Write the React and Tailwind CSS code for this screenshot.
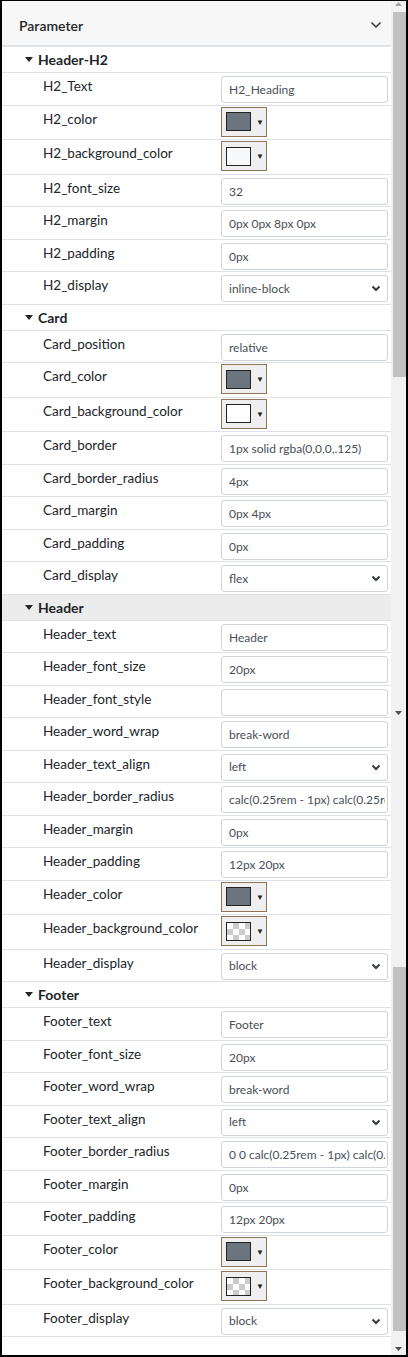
import React from 'react';

const FONT = { fontFamily: 'Lato, "Noto Sans", sans-serif' };

const sections = [
  {
    title: 'Header-H2',
    rows: [
      { label: 'H2_Text', type: 'text', value: 'H2_Heading' },
      { label: 'H2_color', type: 'color', color: '#6c757d' },
      { label: 'H2_background_color', type: 'color', color: '#f8f9fa' },
      { label: 'H2_font_size', type: 'text', value: '32' },
      { label: 'H2_margin', type: 'text', value: '0px 0px 8px 0px' },
      { label: 'H2_padding', type: 'text', value: '0px' },
      { label: 'H2_display', type: 'select', value: 'inline-block' },
    ],
  },
  {
    title: 'Card',
    rows: [
      { label: 'Card_position', type: 'text', value: 'relative' },
      { label: 'Card_color', type: 'color', color: '#6c757d' },
      { label: 'Card_background_color', type: 'color', color: '#ffffff' },
      { label: 'Card_border', type: 'text', value: '1px solid rgba(0,0,0,.125)' },
      { label: 'Card_border_radius', type: 'text', value: '4px' },
      { label: 'Card_margin', type: 'text', value: '0px 4px' },
      { label: 'Card_padding', type: 'text', value: '0px' },
      { label: 'Card_display', type: 'select', value: 'flex' },
    ],
  },
  {
    title: 'Header',
    active: true,
    rows: [
      { label: 'Header_text', type: 'text', value: 'Header' },
      { label: 'Header_font_size', type: 'text', value: '20px' },
      { label: 'Header_font_style', type: 'text', value: '' },
      { label: 'Header_word_wrap', type: 'text', value: 'break-word' },
      { label: 'Header_text_align', type: 'select', value: 'left' },
      { label: 'Header_border_radius', type: 'text', value: 'calc(0.25rem - 1px) calc(0.25rem - 1px) 0 0' },
      { label: 'Header_margin', type: 'text', value: '0px' },
      { label: 'Header_padding', type: 'text', value: '12px 20px' },
      { label: 'Header_color', type: 'color', color: '#6c757d' },
      { label: 'Header_background_color', type: 'color', color: 'transparent' },
      { label: 'Header_display', type: 'select', value: 'block' },
    ],
  },
  {
    title: 'Footer',
    rows: [
      { label: 'Footer_text', type: 'text', value: 'Footer' },
      { label: 'Footer_font_size', type: 'text', value: '20px' },
      { label: 'Footer_word_wrap', type: 'text', value: 'break-word' },
      { label: 'Footer_text_align', type: 'select', value: 'left' },
      { label: 'Footer_border_radius', type: 'text', value: '0 0 calc(0.25rem - 1px) calc(0.25rem - 1px)' },
      { label: 'Footer_margin', type: 'text', value: '0px' },
      { label: 'Footer_padding', type: 'text', value: '12px 20px' },
      { label: 'Footer_color', type: 'color', color: '#6c757d' },
      { label: 'Footer_background_color', type: 'color', color: 'transparent' },
      { label: 'Footer_display', type: 'select', value: 'block' },
    ],
  },
];

const Checker = () => (
  <svg width="23" height="17" viewBox="0 0 23 17" className="block">
    <rect width="23" height="17" fill="#ffffff" />
    {[0, 1, 2].map(r =>
      [0, 1, 2, 3].map(c =>
        (r + c) % 2 === 1 ? (
          <rect key={`${r}-${c}`} x={c * 6} y={r * 6} width="6" height="6" fill="#cbcbcb" />
        ) : null
      )
    )}
  </svg>
);

const ColorButton = ({ color }) => (
  <div className="flex items-center w-[46px] h-[30px] border border-[#8f7356] bg-[#efefef] pl-[4px]">
    <div className="w-[25px] h-[19px] border border-[#222] overflow-hidden" style={{ backgroundColor: color === 'transparent' ? undefined : color }}>
      {color === 'transparent' && <Checker />}
    </div>
    <span className="ml-[5px] text-[8px] leading-none text-[#222]">▼</span>
  </div>
);

const TextBox = ({ value }) => (
  <input
    readOnly
    value={value}
    className="block w-[167px] h-[27px] border border-[#ced4da] rounded-[3px] bg-white pl-[7px] pr-[2px] text-[12px] text-[#495057] outline-none"
    style={FONT}
  />
);

const SelectBox = ({ value }) => (
  <div className="w-[167px] h-[27px] border border-[#ced4da] rounded-[3px] bg-white pl-[7px] pr-[6px] flex items-center justify-between text-[12px] text-[#495057]">
    <span>{value}</span>
    <svg width="10" height="7" viewBox="0 0 10 7">
      <path d="M1.5 1.5 L5 5 L8.5 1.5" fill="none" stroke="#343a40" strokeWidth="2" />
    </svg>
  </div>
);

const Row = ({ row }) => {
  const isColor = row.type === 'color';
  return (
    <div className={`flex border-b border-[#dee2e6] ${isColor ? 'h-[34.5px]' : 'h-[32.5px]'}`}>
      <div className="w-[219px] shrink-0 pl-[41px] pt-[3px] text-[13.5px] leading-[20px] text-[#212529]">
        {row.label}
      </div>
      <div className={isColor ? 'pt-[1px]' : 'pt-[3px]'}>
        {row.type === 'text' && <TextBox value={row.value} />}
        {row.type === 'select' && <SelectBox value={row.value} />}
        {isColor && <ColorButton color={row.color} />}
      </div>
    </div>
  );
};

const Section = ({ section }) => (
  <div>
    <div className={`flex items-center h-[26px] border-b border-[#dee2e6] pl-[23px] text-[14px] font-bold text-[#212529] ${section.active ? 'bg-[#ececec]' : ''}`}>
      <svg width="8" height="5" viewBox="0 0 8 5" className="mr-[5px]">
        <path d="M0 0 H8 L4 5 Z" fill="#212529" />
      </svg>
      {section.title}
    </div>
    {section.rows.map(row => (
      <Row key={row.label} row={row} />
    ))}
  </div>
);

const Arrow = ({ up, color }) => (
  <svg width="7" height="4" viewBox="0 0 7 4">
    <path d={up ? 'M0 4 L3.5 0 L7 4 Z' : 'M0 0 L7 0 L3.5 4 Z'} fill={color} />
  </svg>
);

const Scrollbar = () => (
  <div className="w-[15px] shrink-0 bg-[#f1f1f1] flex flex-col">
    <div className="h-[11px] flex justify-center pt-[1px]">
      <Arrow up color="#a3a3a3" />
    </div>
    <div className="h-[365px] ml-[2px] bg-[#c1c1c1]" />
    <div className="h-[330px]" />
    <div className="h-[12px] flex items-center justify-center">
      <Arrow color="#505050" />
    </div>
    <div className="h-[248px]" />
    <div className="h-[364px] ml-[2px] bg-[#c1c1c1]" />
    <div className="flex-1 flex items-end justify-center pb-[4px]">
      <Arrow color="#505050" />
    </div>
  </div>
);

export default function App() {
  return (
    <div className="w-[408px] h-[1357px] bg-white border-2 border-t border-black flex overflow-hidden" style={FONT}>
      <div className="w-[389px] shrink-0">
        <div className="h-[46px] bg-[#f7f7f7] border-b-2 border-[#dfe3e6] flex items-center justify-between pl-[17px] pr-[9px] pt-[4px]">
          <span className="text-[14px] font-semibold text-[#212529]">Parameter</span>
          <svg width="12" height="8" viewBox="0 0 12 8">
            <path d="M1.5 1.5 L6 6 L10.5 1.5" fill="none" stroke="#333" strokeWidth="1.5" />
          </svg>
        </div>
        {sections.map(section => (
          <Section key={section.title} section={section} />
        ))}
      </div>
      <Scrollbar />
    </div>
  );
}
